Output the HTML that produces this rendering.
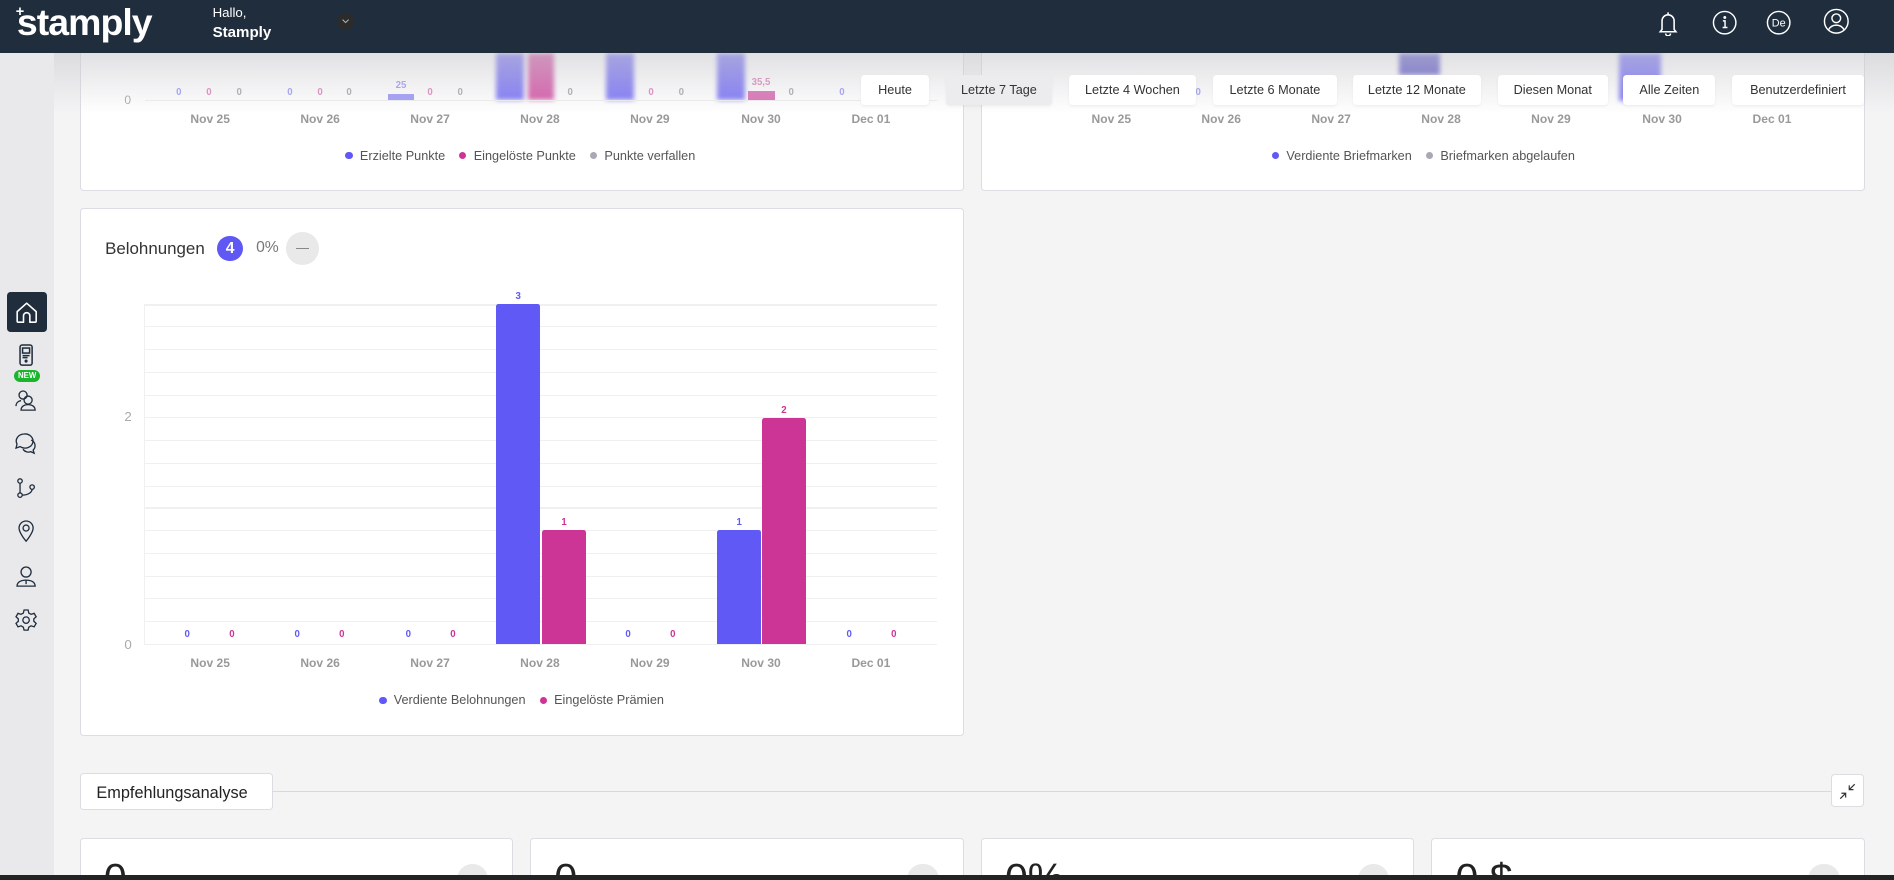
<!DOCTYPE html>
<html><head><meta charset="utf-8">
<style>
*{box-sizing:border-box;margin:0;padding:0}
html,body{width:1894px;height:880px;overflow:hidden;background:#f4f4f5}
#w{zoom:1.20791;position:relative;width:1568px;height:729px;overflow:hidden;background:#f4f4f5;font-family:"Liberation Sans",sans-serif}
.a{position:absolute}
.hdr{left:0;top:0;width:1568px;height:44px;background:#1f2d3d;z-index:5}
.side{left:0;top:44px;width:45px;height:685px;background:#e9e9ec}
.card{background:#fff;border:1px solid #dcdce3;border-radius:3px}
.btn{top:62px;height:25px;background:#fff;border-radius:3px;font-size:10.5px;color:#333;text-align:center;line-height:25px;z-index:4;box-shadow:0 1px 2px rgba(0,0,0,.05)}
.xl{font-size:10px;color:#999;font-weight:bold;transform:translateX(-50%)}
.vl{font-size:8px;font-weight:bold;transform:translateX(-50%)}
.p{color:#6159f5}.m{color:#cc3596}.g{color:#aaa}
.lg{font-size:10.5px;color:#555}
.dot{display:inline-block;width:6px;height:6px;border-radius:50%;margin:0 6px 1px 0;vertical-align:middle}
.gl{left:120px;width:656px;height:1px;background:#f0f0f2}
.si{left:12px;width:20px;height:20px}
</style></head><body><div id="w">

<div class="a card" style="left:66px;top:20px;width:732px;height:138px"></div>
<div class="a card" style="left:812px;top:20px;width:732px;height:138px"></div>
<div class="a" style="left:411px;top:44px;width:23px;height:39px;background:#6159f5;filter:blur(2px);opacity:.8"></div>
<div class="a" style="left:437px;top:44px;width:22px;height:39px;background:#cc3596;filter:blur(2px);opacity:.8"></div>
<div class="a" style="left:502px;top:44px;width:23px;height:39px;background:#6159f5;filter:blur(2px);opacity:.8"></div>
<div class="a" style="left:594px;top:44px;width:23px;height:39px;background:#6159f5;filter:blur(2px);opacity:.8"></div>
<div class="a" style="left:619px;top:75px;width:23px;height:8px;background:#cc3596;opacity:.7"></div>
<div class="a" style="left:321px;top:78px;width:22px;height:5px;background:#6159f5;opacity:.6"></div>
<div class="a" style="left:1158px;top:44px;width:34px;height:18px;background:#5c55c8;filter:blur(2px);opacity:.9"></div>
<div class="a" style="left:1340px;top:44px;width:35px;height:40px;background:#6159f5;filter:blur(2px);opacity:.8"></div>
<div class="a g" style="left:103px;top:77px;font-size:10px">0</div>
<div class="a vl p" style="left:148px;top:72px;opacity:.6">0</div><div class="a vl m" style="left:173px;top:72px;opacity:.6">0</div><div class="a vl g" style="left:198px;top:72px">0</div>
<div class="a vl p" style="left:240px;top:72px;opacity:.6">0</div><div class="a vl m" style="left:265px;top:72px;opacity:.6">0</div><div class="a vl g" style="left:289px;top:72px">0</div>
<div class="a vl p" style="left:332px;top:66px;opacity:.6">25</div><div class="a vl m" style="left:356px;top:72px;opacity:.6">0</div><div class="a vl g" style="left:381px;top:72px">0</div>
<div class="a vl g" style="left:472px;top:72px">0</div>
<div class="a vl m" style="left:539px;top:72px;opacity:.6">0</div><div class="a vl g" style="left:564px;top:72px">0</div>
<div class="a vl m" style="left:630px;top:64px;opacity:.6">35,5</div><div class="a vl g" style="left:655px;top:72px">0</div>
<div class="a vl p" style="left:697px;top:72px;opacity:.6">0</div>
<div class="a vl p" style="left:992px;top:72px;opacity:.6">0</div>
<div class="a" style="left:45px;top:44px;width:1523px;height:50px;background:linear-gradient(rgba(200,200,205,.55),rgba(244,244,245,0));z-index:3"></div>
<div class="a" style="left:120px;top:83px;width:656px;height:1px;background:#eee"></div>
<div class="a xl" style="left:174px;top:93px">Nov 25</div><div class="a xl" style="left:265px;top:93px">Nov 26</div><div class="a xl" style="left:356px;top:93px">Nov 27</div><div class="a xl" style="left:447px;top:93px">Nov 28</div><div class="a xl" style="left:538px;top:93px">Nov 29</div><div class="a xl" style="left:630px;top:93px">Nov 30</div><div class="a xl" style="left:721px;top:93px">Dec 01</div>
<div class="a lg" style="left:286px;top:123px"><span class="dot" style="background:#6159f5"></span>Erzielte Punkte&nbsp;&nbsp;&nbsp;&nbsp;<span class="dot" style="background:#cc3596"></span>Eingelöste Punkte&nbsp;&nbsp;&nbsp;&nbsp;<span class="dot" style="background:#a9a9b5"></span>Punkte verfallen</div>
<div class="a xl" style="left:920px;top:93px">Nov 25</div><div class="a xl" style="left:1011px;top:93px">Nov 26</div><div class="a xl" style="left:1102px;top:93px">Nov 27</div><div class="a xl" style="left:1193px;top:93px">Nov 28</div><div class="a xl" style="left:1284px;top:93px">Nov 29</div><div class="a xl" style="left:1376px;top:93px">Nov 30</div><div class="a xl" style="left:1467px;top:93px">Dec 01</div>
<div class="a lg" style="left:1053px;top:123px"><span class="dot" style="background:#6159f5"></span>Verdiente Briefmarken&nbsp;&nbsp;&nbsp;&nbsp;<span class="dot" style="background:#a9a9b5"></span>Briefmarken abgelaufen</div>

<div class="a btn" style="left:713px;width:56px">Heute</div>
<div class="a btn" style="left:783px;width:88px;background:#ececee">Letzte 7 Tage</div>
<div class="a btn" style="left:885px;width:105px">Letzte 4 Wochen</div>
<div class="a btn" style="left:1004px;width:103px">Letzte 6 Monate</div>
<div class="a btn" style="left:1120px;width:106px">Letzte 12 Monate</div>
<div class="a btn" style="left:1240px;width:91px">Diesen Monat</div>
<div class="a btn" style="left:1344px;width:76px">Alle Zeiten</div>
<div class="a btn" style="left:1434px;width:109px">Benutzerdefiniert</div>

<div class="a card" style="left:66px;top:172px;width:732px;height:437px"></div>
<div class="a" style="left:87px;top:198px;font-size:14px;color:#333">Belohnungen</div>
<div class="a" style="left:180px;top:195px;width:21px;height:21px;border-radius:50%;background:#5f58f5;color:#fff;font-weight:bold;font-size:13px;text-align:center;line-height:21px">4</div>
<div class="a" style="left:212px;top:198px;font-size:13px;color:#777">0%</div>
<div class="a" style="left:237px;top:192px;width:27px;height:27px;border-radius:50%;background:#e9e9ea"><div class="a" style="left:8px;top:13px;width:11px;height:1.5px;background:#888"></div></div>
<div class="a" style="left:119px;top:252px;width:1px;height:282px;background:#f0f0f2"></div>
<div class="a gl" style="top:252px"></div><div class="a gl" style="top:270px"></div><div class="a gl" style="top:289px"></div><div class="a gl" style="top:308px"></div><div class="a gl" style="top:327px"></div><div class="a gl" style="top:345px"></div><div class="a gl" style="top:364px"></div><div class="a gl" style="top:383px"></div><div class="a gl" style="top:402px"></div><div class="a gl" style="top:420px"></div><div class="a gl" style="top:439px"></div><div class="a gl" style="top:458px"></div><div class="a gl" style="top:477px"></div><div class="a gl" style="top:495px"></div><div class="a gl" style="top:514px"></div><div class="a gl" style="top:533px"></div>
<div class="a g" style="left:103px;top:339px;font-size:11px">2</div>
<div class="a g" style="left:103px;top:527px;font-size:11px">0</div>
<div class="a" style="left:411px;top:252px;width:36px;height:281px;background:#6159f5;border-radius:2px 2px 0 0"></div>
<div class="a" style="left:449px;top:439px;width:36px;height:94px;background:#cc3596;border-radius:2px 2px 0 0"></div>
<div class="a" style="left:594px;top:439px;width:36px;height:94px;background:#6159f5;border-radius:2px 2px 0 0"></div>
<div class="a" style="left:631px;top:346px;width:36px;height:187px;background:#cc3596;border-radius:2px 2px 0 0"></div>
<div class="a vl p" style="left:429px;top:241px">3</div><div class="a vl m" style="left:467px;top:428px">1</div><div class="a vl p" style="left:612px;top:428px">1</div><div class="a vl m" style="left:649px;top:335px">2</div>
<div class="a vl p" style="left:155px;top:521px">0</div><div class="a vl m" style="left:192px;top:521px">0</div>
<div class="a vl p" style="left:246px;top:521px">0</div><div class="a vl m" style="left:283px;top:521px">0</div>
<div class="a vl p" style="left:338px;top:521px">0</div><div class="a vl m" style="left:375px;top:521px">0</div>
<div class="a vl p" style="left:520px;top:521px">0</div><div class="a vl m" style="left:557px;top:521px">0</div>
<div class="a vl p" style="left:703px;top:521px">0</div><div class="a vl m" style="left:740px;top:521px">0</div>
<div class="a xl" style="left:174px;top:543px">Nov 25</div><div class="a xl" style="left:265px;top:543px">Nov 26</div><div class="a xl" style="left:356px;top:543px">Nov 27</div><div class="a xl" style="left:447px;top:543px">Nov 28</div><div class="a xl" style="left:538px;top:543px">Nov 29</div><div class="a xl" style="left:630px;top:543px">Nov 30</div><div class="a xl" style="left:721px;top:543px">Dec 01</div>
<div class="a lg" style="left:314px;top:574px"><span class="dot" style="background:#6159f5"></span>Verdiente Belohnungen&nbsp;&nbsp;&nbsp;&nbsp;<span class="dot" style="background:#cc3596"></span>Eingelöste Prämien</div>

<div class="a" style="left:225px;top:655px;width:1291px;height:1px;background:#d8d8de"></div>
<div class="a card" style="left:66px;top:640px;width:160px;height:31px;font-size:13.5px;color:#222;padding:8px 0 0 13px">Empfehlungsanalyse</div>
<div class="a card" style="left:1516px;top:641px;width:27px;height:27px">
<svg class="a" style="left:6px;top:6px" width="14" height="14" viewBox="0 0 14 14" fill="none" stroke="#333" stroke-width="1"><path d="M13 1L8.5 5.5M8.5 2v3.5H12M1 13l4.5-4.5M2 8.5h3.5V12"/></svg></div>
<div class="a card" style="left:66px;top:694px;width:359px;height:60px"></div>
<div class="a card" style="left:439px;top:694px;width:359px;height:60px"></div>
<div class="a card" style="left:812px;top:694px;width:359px;height:60px"></div>
<div class="a card" style="left:1185px;top:694px;width:359px;height:60px"></div>
<div class="a" style="left:86px;top:708px;font-size:34px;color:#222">0</div>
<div class="a" style="left:459px;top:708px;font-size:34px;color:#222">0</div>
<div class="a" style="left:832px;top:708px;font-size:34px;color:#222">0%</div>
<div class="a" style="left:1205px;top:708px;font-size:34px;color:#222">0 $</div>
<div class="a" style="left:378px;top:715px;width:26px;height:26px;border-radius:50%;background:#e9e9ea"></div>
<div class="a" style="left:751px;top:715px;width:26px;height:26px;border-radius:50%;background:#e9e9ea"></div>
<div class="a" style="left:1124px;top:715px;width:26px;height:26px;border-radius:50%;background:#e9e9ea"></div>
<div class="a" style="left:1497px;top:715px;width:26px;height:26px;border-radius:50%;background:#e9e9ea"></div>
<div class="a" style="left:0;top:724px;width:1568px;height:5px;background:#232323;z-index:6"></div>

<div class="a side"></div>
<div class="a" style="left:6px;top:242px;width:33px;height:33px;background:#1f2d3d;border-radius:3px"></div>
<svg class="a" style="left:12px;top:248px" width="21" height="21" viewBox="0 0 24 24" fill="none" stroke="#fff" stroke-width="1.5" stroke-linejoin="round"><path d="M3 11L12 3l9 8v9a1 1 0 0 1-1 1h-5v-6a3 3 0 0 0-6 0v6H4a1 1 0 0 1-1-1z"/></svg>
<svg class="a si" style="top:284px" viewBox="0 0 24 24" fill="none" stroke="#1f2d3d" stroke-width="1.5"><rect x="6" y="2" width="12" height="20" rx="2"/><rect x="8.5" y="5" width="7" height="5"/><path d="M8.5 12.5h7M8.5 14.5h5"/><circle cx="12" cy="18" r=".8" fill="#1f2d3d"/></svg>
<div class="a" style="left:12px;top:306px;width:21px;height:10px;border-radius:5px;background:#1bb52d;color:#fff;font-size:6.5px;font-weight:bold;text-align:center;line-height:10px">NEW</div>
<svg class="a si" style="top:321px" viewBox="0 0 24 24" fill="none" stroke="#1f2d3d" stroke-width="1.3"><circle cx="9" cy="7" r="4"/><path d="M2 18c0-3 2-5 5-5.5"/><circle cx="14" cy="12" r="4"/><path d="M7 22c0-3.5 3-5.5 7-5.5s7 2 7 5.5z"/></svg>
<svg class="a si" style="top:357px" viewBox="0 0 24 24" fill="none" stroke="#1f2d3d" stroke-width="1.3"><path d="M10 3a8 7 0 0 0-7 10l-1 4 4-1.5A8 7 0 1 0 10 3z"/><path d="M17 9a6 6 0 0 1 2 10l1 3-3.5-1.5A6 6 0 0 1 9 18"/></svg>
<svg class="a si" style="top:394px" viewBox="0 0 24 24" fill="none" stroke="#1f2d3d" stroke-width="1.3"><circle cx="6" cy="5" r="2.2"/><circle cx="6" cy="19" r="2.2"/><circle cx="18" cy="11" r="2.2"/><path d="M6 7.2v9.6M8.2 19c6 0 9.8-3 9.8-5.8"/></svg>
<svg class="a si" style="top:430px" viewBox="0 0 24 24" fill="none" stroke="#1f2d3d" stroke-width="1.3"><path d="M12 22s-7-8-7-13a7 7 0 0 1 14 0c0 5-7 13-7 13z"/><circle cx="12" cy="9" r="3"/></svg>
<svg class="a si" style="top:467px" viewBox="0 0 24 24" fill="none" stroke="#1f2d3d" stroke-width="1.3"><circle cx="12" cy="8" r="5"/><path d="M3 22c0-4 4-6 9-6s9 2 9 6z"/><path d="M12 16v4"/></svg>
<svg class="a si" style="top:503px" viewBox="0 0 24 24" fill="none" stroke="#1f2d3d" stroke-width="1.3"><circle cx="12" cy="12" r="3.2"/><path d="M10 2h4l.7 3 2.3 1.3 3-1 2 3.4-2.3 2.1v2.4l2.3 2.1-2 3.4-3-1L14.7 19 14 22h-4l-.7-3L7 17.7l-3 1-2-3.4 2.3-2.1v-2.4L2 8.7l2-3.4 3 1L9.3 5z"/></svg>

<div class="a hdr">
<div class="a" style="left:14px;top:1px;font-size:31px;font-weight:bold;color:#fff;letter-spacing:-.8px">stamply</div>
<div class="a" style="left:13px;top:3px;font-size:12px;font-weight:bold;color:#fff">+</div>
<div class="a" style="left:176px;top:4px;font-size:11px;color:#fff">Hallo,</div>
<div class="a" style="left:176px;top:20px;font-size:12.5px;font-weight:bold;color:#fff">Stamply</div>
<div class="a" style="left:279px;top:11px;width:14px;height:14px;border-radius:50%;background:#2b2b2b"><svg class="a" style="left:4px;top:5px" width="6" height="4" viewBox="0 0 6 4" fill="none" stroke="#bbb" stroke-width=".8"><path d="M.5.5L3 3 5.5.5"/></svg></div>
<svg class="a" style="left:1371px;top:8px" width="20" height="22" viewBox="0 0 20 22" fill="none" stroke="#fff" stroke-width="1.3"><path d="M10 2v1.5M5 16V9a5 5 0 0 1 10 0v7l1.5 2h-13zM8 19.5a2 2 0 0 0 4 0"/></svg>
<svg class="a" style="left:1417px;top:8px" width="21" height="21" viewBox="0 0 21 21" fill="none" stroke="#fff" stroke-width="1.2"><circle cx="10.5" cy="10.5" r="9.3"/><path d="M9 9h1.8v5.5M8.8 14.5h4"/><circle cx="10.6" cy="6.2" r=".6" fill="#fff"/></svg>
<svg class="a" style="left:1462px;top:8px" width="21" height="21" viewBox="0 0 21 21" fill="none" stroke="#fff" stroke-width="1.2"><circle cx="10.5" cy="10.5" r="9.3"/><text x="10.5" y="13.8" fill="#fff" stroke="none" font-size="9" font-family="Liberation Sans" text-anchor="middle">De</text></svg>
<svg class="a" style="left:1509px;top:7px" width="22" height="22" viewBox="0 0 22 22" fill="none" stroke="#fff" stroke-width="1.2"><circle cx="11" cy="11" r="9.8"/><circle cx="11" cy="8.5" r="3.6"/><path d="M4.5 18.2c1.3-2.5 3.8-4 6.5-4s5.2 1.5 6.5 4"/></svg>
</div>
</div></body></html>
